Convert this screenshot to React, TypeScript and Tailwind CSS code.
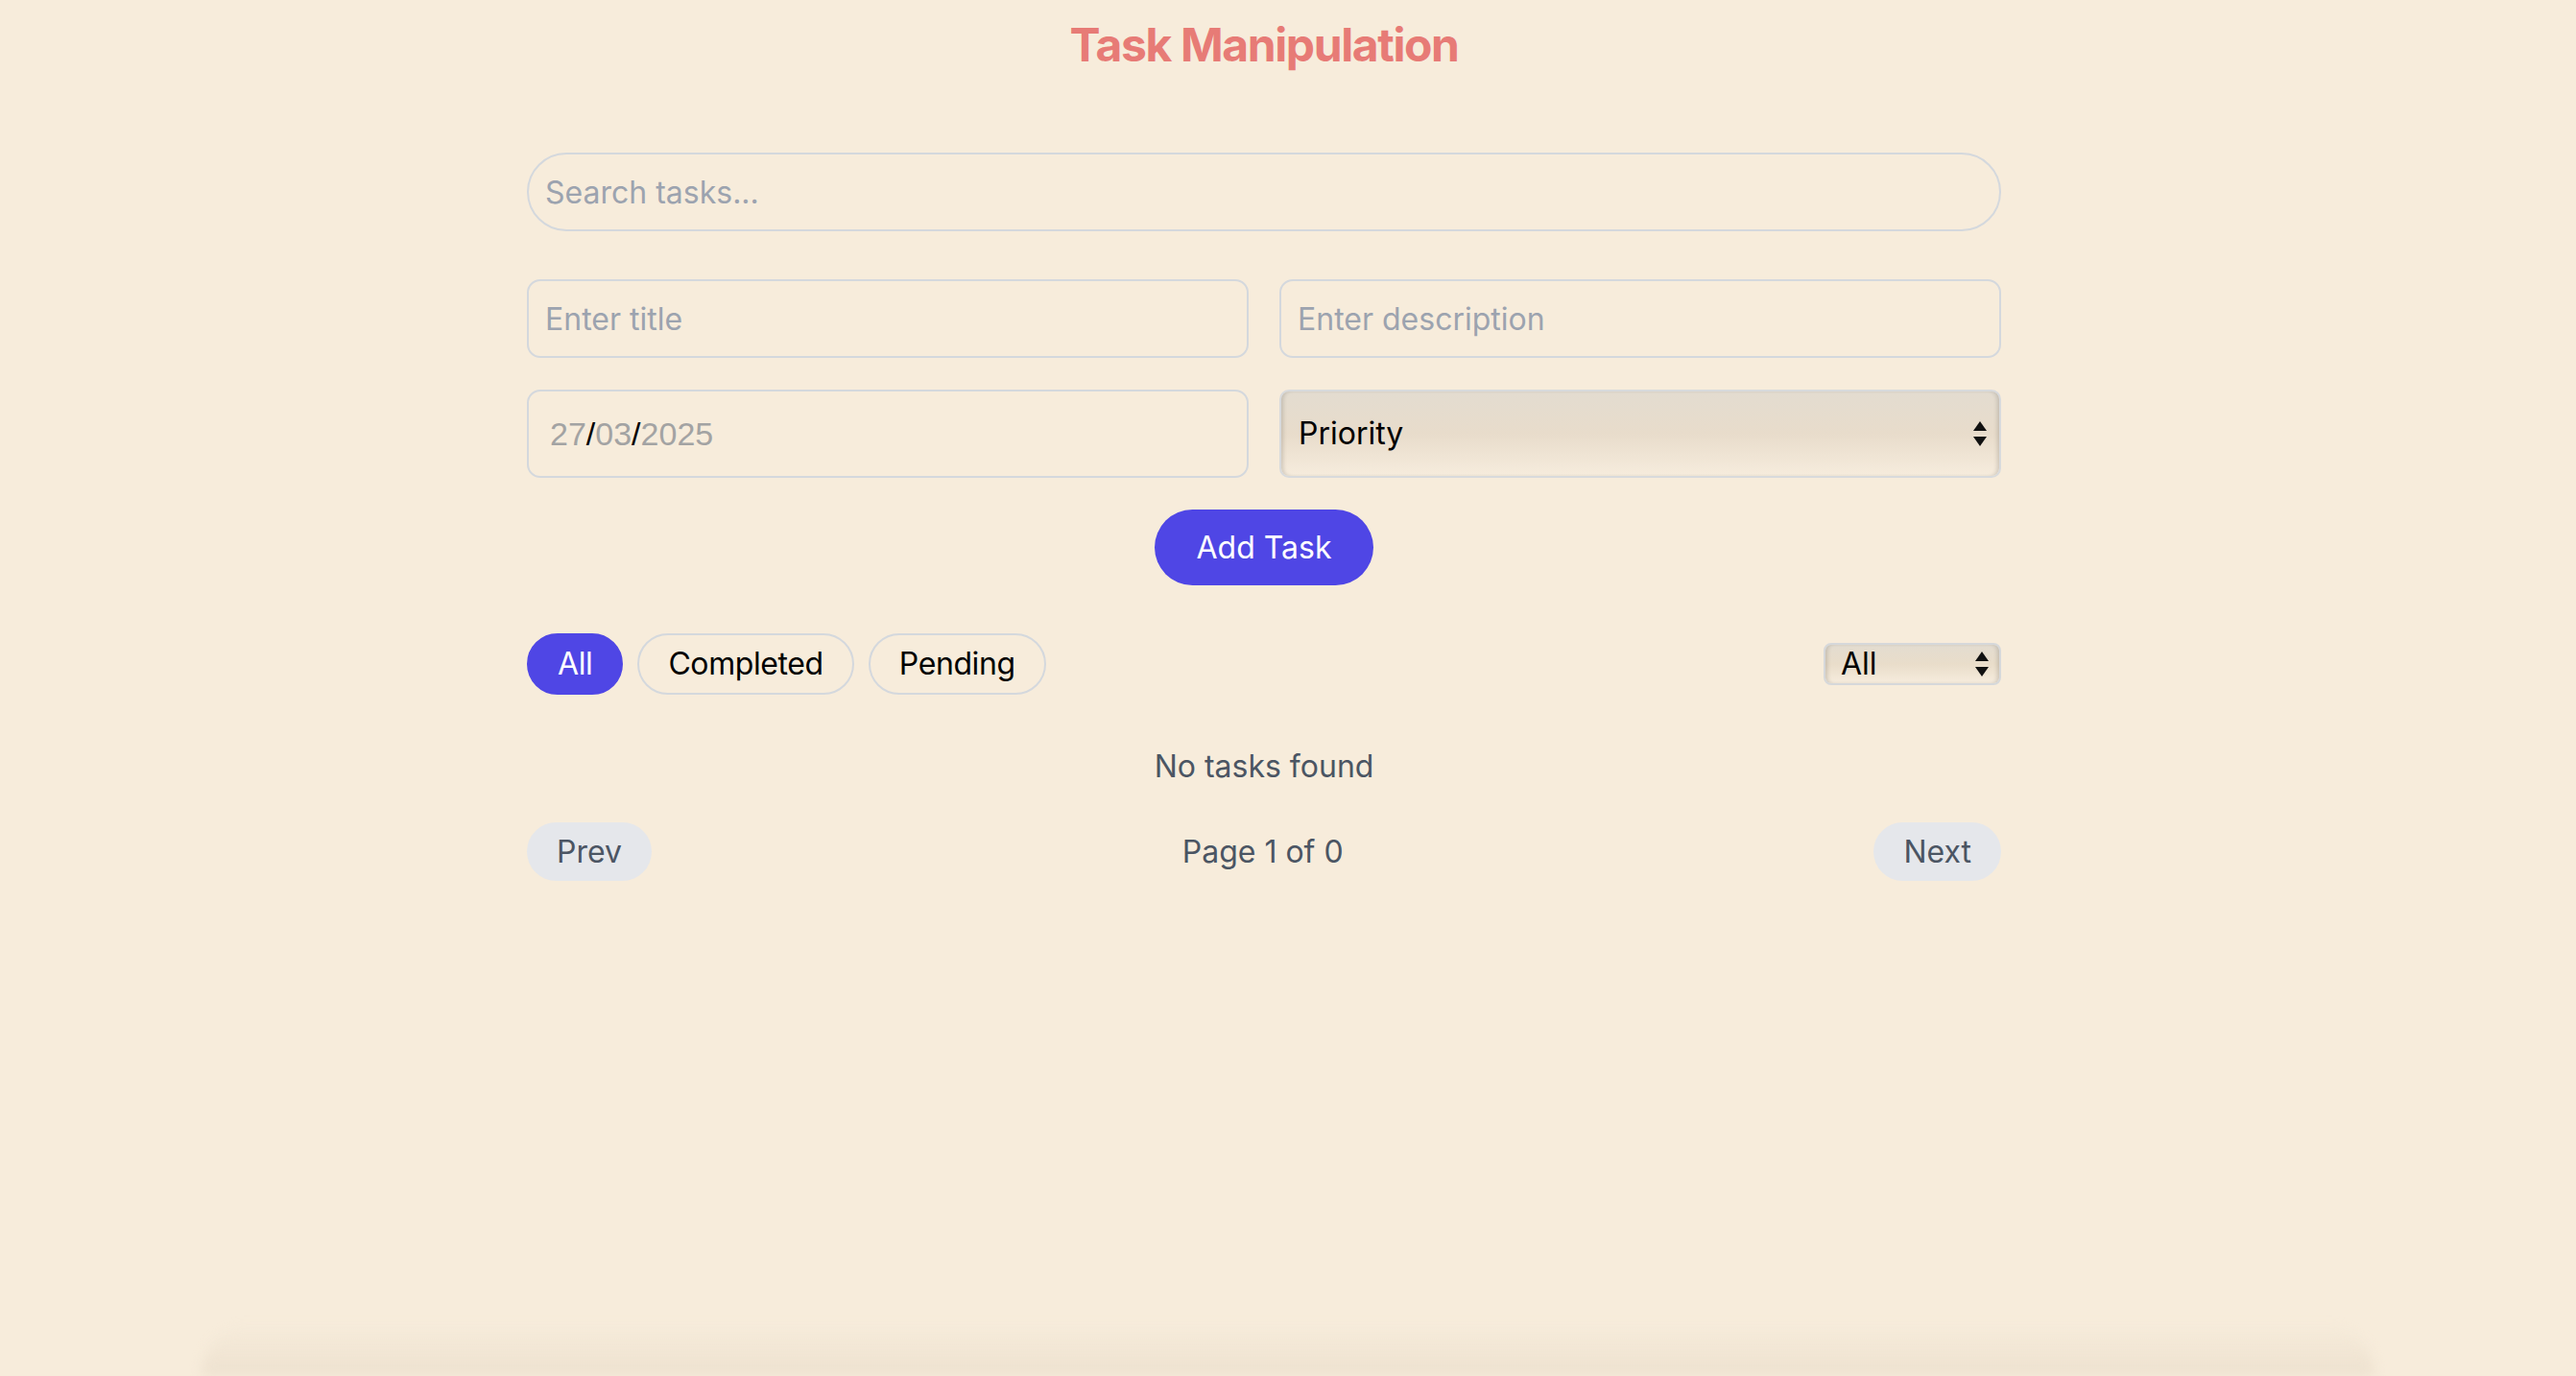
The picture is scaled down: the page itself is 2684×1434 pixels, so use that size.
import React, { useState } from "react";

const font = "font-['Inter','Liberation_Sans',sans-serif]";

const Arrows = () => (
  <svg width="16" height="30" viewBox="0 0 16 30" className="shrink-0">
    <path d="M8 2 L15 12 L1 12 Z" fill="#111" />
    <path d="M1 18 L15 18 L8 28 Z" fill="#111" />
  </svg>
);

const App = () => {
  const [filter, setFilter] = useState("All");

  const filters = ["All", "Completed", "Pending"];

  return (
    <div className={`min-h-screen bg-[#f7ecdb] flex flex-col ${font}`}>
      <div className="flex-1 flex justify-center pr-[50px]">
        <div className="w-[1536px] flex flex-col">
          <h1 className="text-center text-[48px] leading-[64px] font-bold tracking-[-1.4px] text-[#e77b76] mt-[15px]">
            Task Manipulation
          </h1>

          {/* search */}
          <input
            placeholder="Search tasks..."
            className="mt-[80px] h-[82px] w-full rounded-full border-2 border-[#d4d8dd] bg-transparent px-[17px] text-[32px] text-gray-900 placeholder:text-[#9ca3af] outline-none"
          />

          {/* form */}
          <div className="mt-[50px] grid grid-cols-2 gap-x-[32px] gap-y-[33px]">
            <input
              placeholder="Enter title"
              className="h-[82px] rounded-[14px] border-2 border-[#d4d8dd] bg-transparent px-[17px] text-[32px] placeholder:text-[#9ca3af] outline-none"
            />
            <input
              placeholder="Enter description"
              className="h-[82px] rounded-[14px] border-2 border-[#d4d8dd] bg-transparent px-[17px] text-[32px] placeholder:text-[#9ca3af] outline-none"
            />
            <div className="h-[92px] rounded-[14px] border-2 border-[#d4d8dd] flex items-center px-[22px] text-[34px] font-['Liberation_Sans',sans-serif] text-[#a3a3a3]">
              <span>27</span>
              <span className="text-black">/</span>
              <span>03</span>
              <span className="text-black">/</span>
              <span>2025</span>
            </div>
            <div className="h-[92px] rounded-[10px] border-2 border-[#d8dadc] bg-gradient-to-b from-[#e3dcd0] via-[#e8dccb] to-[#f6ecdd] shadow-[inset_4px_0_4px_-2px_rgba(0,0,0,0.15),inset_-4px_0_4px_-2px_rgba(0,0,0,0.15)] flex items-center justify-between pl-[18px] pr-[12px] text-[32px] text-black">
              <span>Priority</span>
              <Arrows />
            </div>
          </div>

          <div className="mt-[33px] flex justify-center">
            <button className="h-[79px] w-[228px] rounded-full bg-[#4f46e5] text-[32px] text-white">
              Add Task
            </button>
          </div>

          {/* filters */}
          <div className="mt-[50px] flex items-center justify-between">
            <div className="flex gap-[15px]">
              {filters.map((f) => (
                <button
                  key={f}
                  onClick={() => setFilter(f)}
                  className={
                    f === filter
                      ? "h-[64px] rounded-full border-2 border-[#4f46e5] bg-[#4f46e5] px-[30px] text-[32px] tracking-[-0.4px] text-white"
                      : "h-[64px] rounded-full border-2 border-[#d4d8dd] px-[30px] text-[32px] tracking-[-0.4px] text-black"
                  }
                >
                  {f}
                </button>
              ))}
            </div>
            <div className="h-[44px] w-[185px] rounded-[8px] border-2 border-[#d6d8da] bg-gradient-to-b from-[#e3dcd0] via-[#e9ddca] to-[#f6ecdd] shadow-[inset_4px_0_4px_-2px_rgba(0,0,0,0.15),inset_-4px_0_4px_-2px_rgba(0,0,0,0.15)] flex items-center justify-between pl-[16px] pr-[10px] text-[32px] text-black">
              <span>All</span>
              <Arrows />
            </div>
          </div>

          <p className="mt-[51px] text-center text-[32px] leading-[48px] text-[#4b5563]">No tasks found</p>

          {/* pagination */}
          <div className="mt-[34px] flex items-center justify-between">
            <button className="h-[61px] rounded-full bg-[#e5e7eb] px-[31px] text-[32px] text-[#4b5563]">
              Prev
            </button>
            <span className="text-[32px] text-[#4b5563]">Page 1 of 0</span>
            <button className="h-[61px] rounded-full bg-[#e5e7eb] px-[31px] text-[32px] text-[#4b5563]">
              Next
            </button>
          </div>
        </div>
      </div>

      <div className="h-[54px] mx-[210px] rounded-t-[60px] bg-gradient-to-b from-transparent to-[#ede1cf] blur-[6px]" />
    </div>
  );
};

export default App;
